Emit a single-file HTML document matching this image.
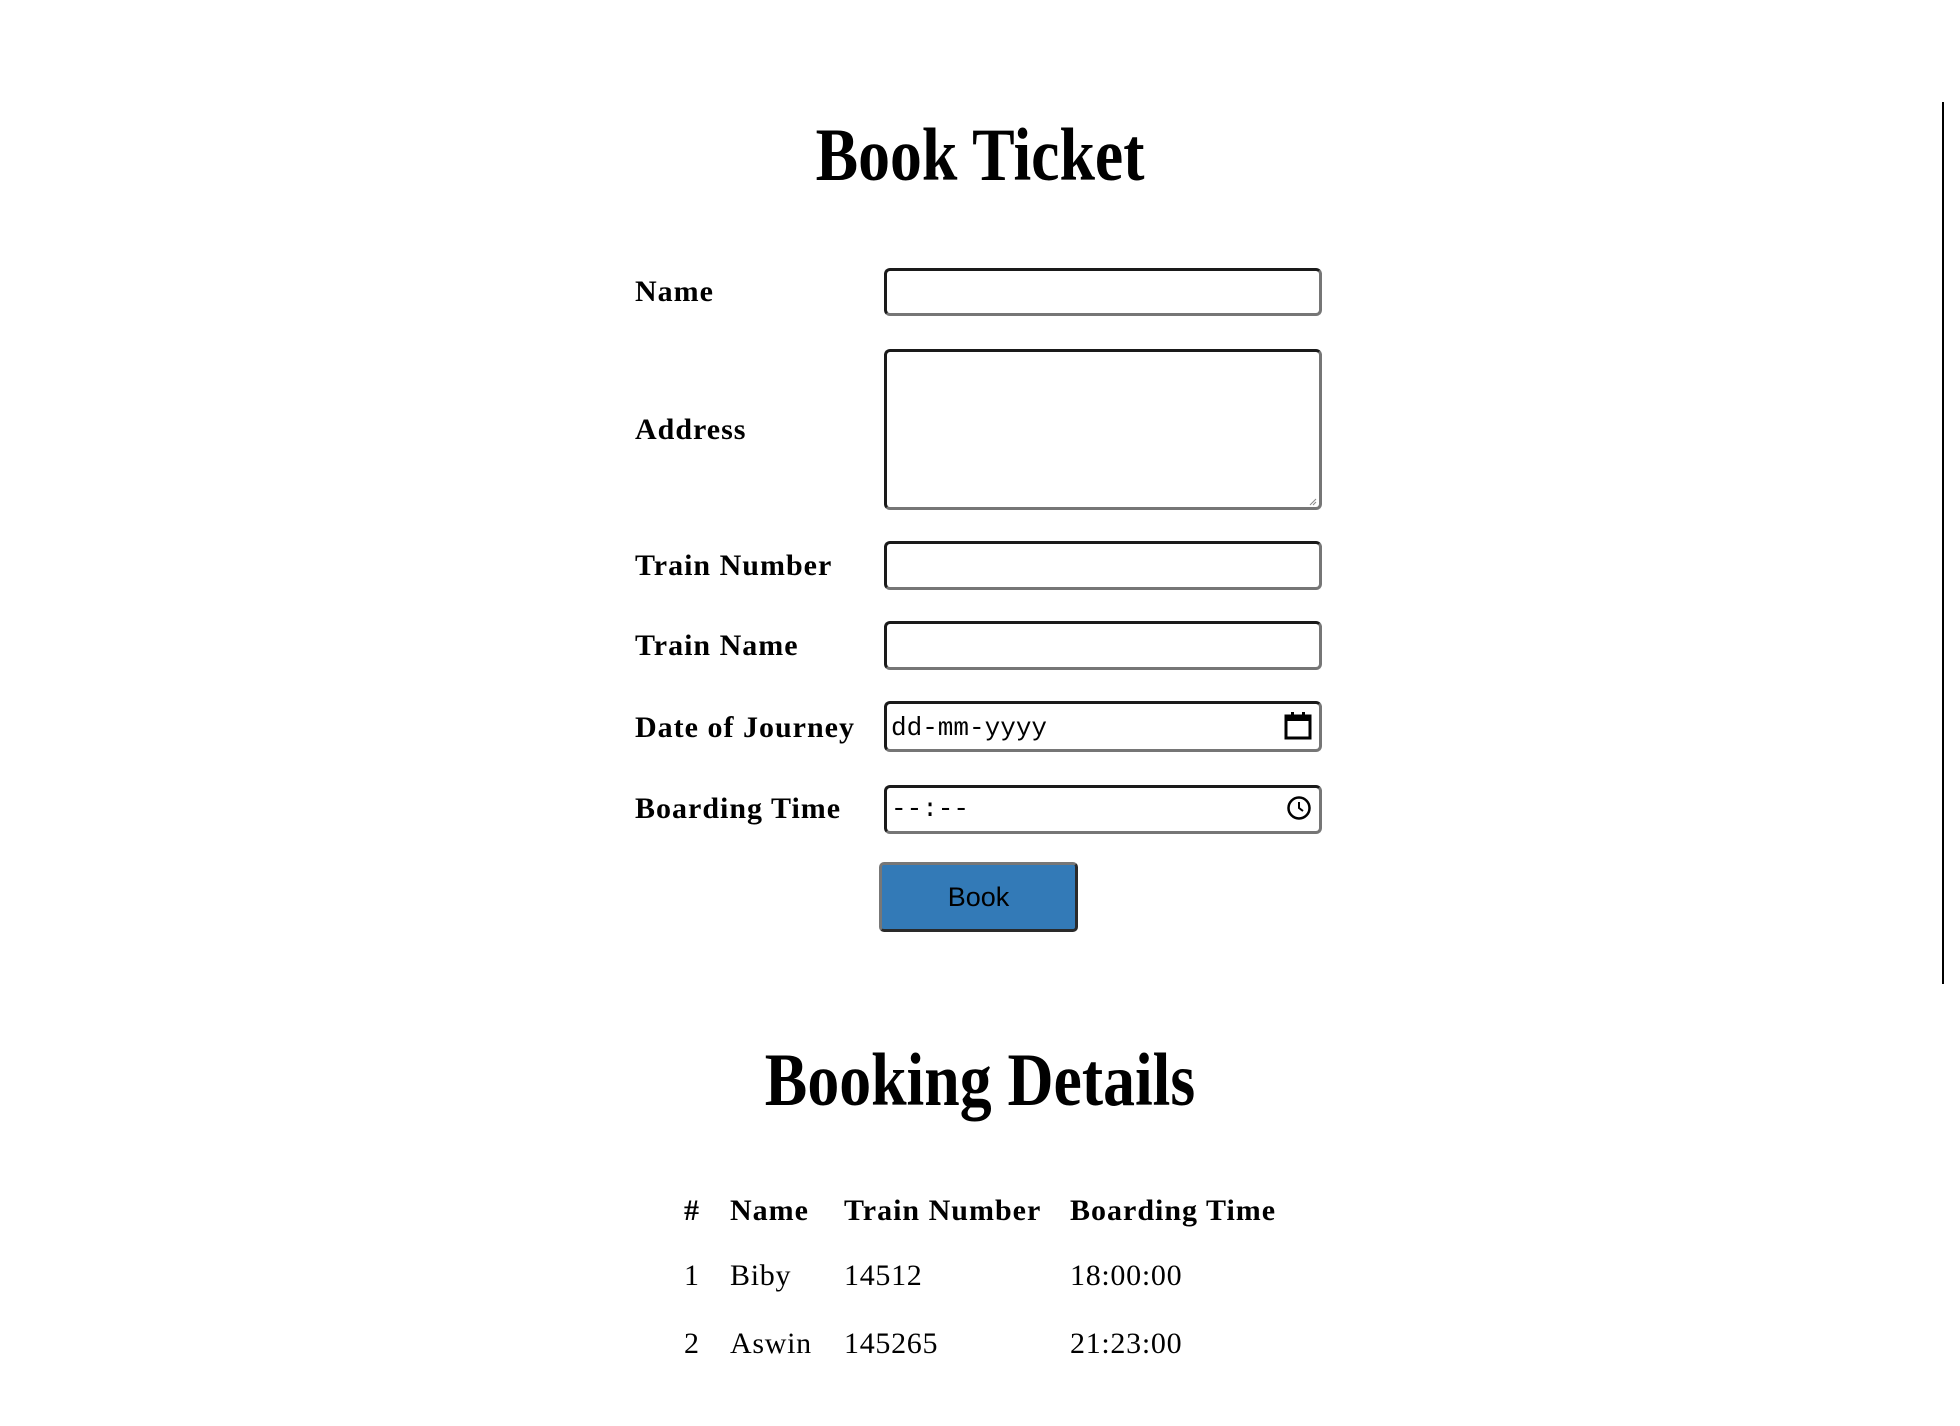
<!DOCTYPE html>
<html><head><meta charset="utf-8"><style>
*{margin:0;padding:0;box-sizing:border-box}
body{width:1960px;height:1426px;background:#fff;position:relative;overflow:hidden;font-family:"Liberation Serif",serif;color:#000}
.t{position:absolute;line-height:1;white-space:nowrap}
.h{font-size:75px;font-weight:bold;left:0;width:1960px;text-align:center;transform:scaleX(0.85)}
.l{font-size:30px;font-weight:bold;left:635px;letter-spacing:1px}
.in{position:absolute;left:884px;width:438px;border:3px solid #767676;border-top-color:#1a1a1a;border-left-color:#1a1a1a;border-radius:6px;background:#fff}
.m{font-family:"Liberation Mono",monospace;font-size:26px;left:891px}
.c{font-size:30px;letter-spacing:0.7px}
.b{font-weight:bold;letter-spacing:1px}
</style></head><body>
<div class="t h" style="top:118px">Book Ticket</div>
<div class="t l" style="top:277px">Name</div>
<div class="t l" style="top:415px">Address</div>
<div class="t l" style="top:551px">Train Number</div>
<div class="t l" style="top:631px">Train Name</div>
<div class="t l" style="top:713px">Date of Journey</div>
<div class="t l" style="top:794px">Boarding Time</div>
<div class="in" style="top:268px;height:48px"></div>
<div class="in" style="top:349px;height:161px"></div>
<div class="in" style="top:541px;height:49px"></div>
<div class="in" style="top:621px;height:49px"></div>
<div class="in" style="top:701px;height:51px"></div>
<div class="in" style="top:785px;height:49px"></div>
<svg style="position:absolute;left:1309px;top:498px" width="8" height="8"><path d="M1 7L7 1M4 7L7 4" stroke="#888" stroke-width="1"/></svg>
<div class="t m" style="top:715px">dd-mm-yyyy</div>
<div class="t m" style="top:796px">--:--</div>
<svg style="position:absolute;left:1284px;top:711px" width="28" height="29" viewBox="0 0 28 29"><rect x="2" y="5" width="24" height="22" fill="none" stroke="#000" stroke-width="3"/><rect x="2" y="5" width="24" height="5" fill="#000"/><rect x="7" y="1" width="3" height="5" fill="#000"/><rect x="18" y="1" width="3" height="5" fill="#000"/></svg>
<svg style="position:absolute;left:1286px;top:795px" width="26" height="26" viewBox="0 0 26 26"><circle cx="13" cy="13" r="10.5" fill="none" stroke="#000" stroke-width="2.5"/><path d="M13 7V13L17 16" fill="none" stroke="#000" stroke-width="2"/></svg>
<div style="position:absolute;left:879px;top:862px;width:199px;height:70px;background:#337ab7;border:3px solid #2a2a2a;border-top-color:#777;border-left-color:#777;border-radius:5px"></div>
<div class="t" style="top:884px;left:879px;width:199px;text-align:center;font-family:'Liberation Sans',sans-serif;font-size:27px">Book</div>
<div style="position:absolute;left:1942px;top:102px;width:2px;height:882px;background:#000"></div>
<div class="t h" style="top:1043px">Booking Details</div>
<div class="t c b" style="top:1196px;left:684px">#</div>
<div class="t c b" style="top:1196px;left:730px">Name</div>
<div class="t c b" style="top:1196px;left:844px">Train Number</div>
<div class="t c b" style="top:1196px;left:1070px">Boarding Time</div>
<div class="t c" style="top:1261px;left:684px">1</div>
<div class="t c" style="top:1261px;left:730px">Biby</div>
<div class="t c" style="top:1261px;left:844px">14512</div>
<div class="t c" style="top:1261px;left:1070px">18:00:00</div>
<div class="t c" style="top:1329px;left:684px">2</div>
<div class="t c" style="top:1329px;left:730px">Aswin</div>
<div class="t c" style="top:1329px;left:844px">145265</div>
<div class="t c" style="top:1329px;left:1070px">21:23:00</div>
</body></html>
